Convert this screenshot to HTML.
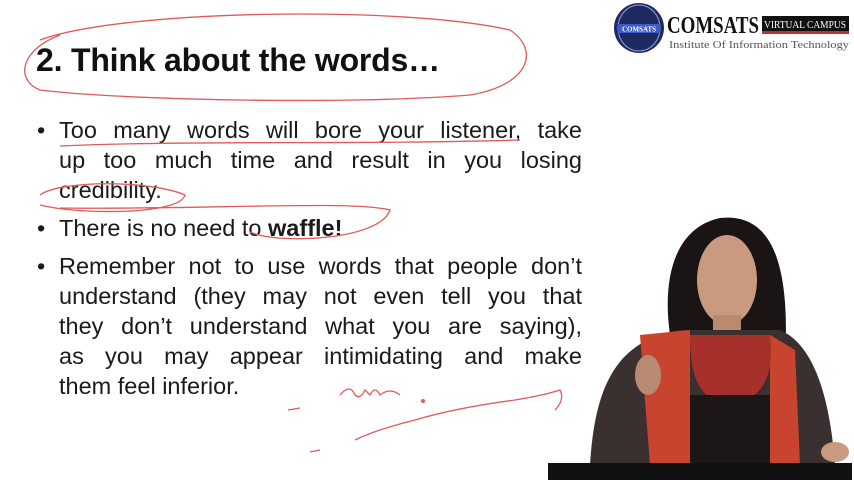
<!DOCTYPE html>
<html><head><style>
body{margin:0;width:854px;height:480px;background:#fff;overflow:hidden;position:relative;font-family:"Liberation Sans",sans-serif;}
.t{position:absolute;left:36px;top:42px;font-size:32px;font-weight:bold;color:#111;letter-spacing:-0.2px}
.l{position:absolute;left:59px;width:523px;font-size:23.5px;line-height:30px;color:#1a1a1a;white-space:nowrap}
.j{text-align:justify;text-align-last:justify;white-space:normal}
.d:before{content:"•";position:absolute;left:-22px}
svg{position:absolute;left:0;top:0}
</style></head><body>
<div class="t">2. Think about the words…</div>
<div class="l j d" style="top:115px">Too many words will bore your listener, take</div>
<div class="l j" style="top:145px">up too much time and result in you losing</div>
<div class="l" style="top:175px">credibility.</div>
<div class="l d" style="top:213px">There is no need to <b>waffle!</b></div>
<div class="l j d" style="top:251px">Remember not to use words that people don’t</div>
<div class="l j" style="top:281px">understand (they may not even tell you that</div>
<div class="l j" style="top:311px">they don’t understand what you are saying),</div>
<div class="l j" style="top:341px">as you may appear intimidating and make</div>
<div class="l" style="top:371px">them feel inferior.</div>
<svg width="854" height="480">
<g fill="none" stroke="#e05a5a" stroke-width="1.3">
<path d="M40 40 C120 10 400 5 510 30 C540 50 530 85 470 95 C350 105 120 100 40 90 C15 80 20 50 60 35"/>
<path d="M60 146 C200 140 350 145 520 140"/>
<path d="M40 195 C60 180 150 180 185 195 C180 215 80 215 40 205"/>
<path d="M60 208 C200 210 350 200 390 210 C380 240 280 245 250 232"/>
<path d="M340 395 q10 -12 15 0 q5 5 10 -5 l5 5 q5 -10 10 0 q10 -8 20 0"/>
<path d="M355 440 q20 -10 60 -20 q40 -12 100 -20 q30 -5 45 -10 q5 10 -5 20"/>
<path d="M288 410 l12 -2 M310 452 l10 -2"/>
</g>
<circle cx="423" cy="401" r="2" fill="#e05a5a"/>
<circle cx="639" cy="28" r="25" fill="#1f2a63"/>
<ellipse cx="639" cy="28" rx="21" ry="23" fill="none" stroke="#8aa0d8" stroke-width="1"/>
<rect x="618" y="24" width="42" height="9" fill="#3b5bc8"/>
<text x="639" y="31.5" font-size="7" fill="#fff" text-anchor="middle" font-weight="bold" font-family="Liberation Serif">COMSATS</text>
<text x="667" y="33" font-size="24" font-family="Liberation Serif" font-weight="bold" fill="#111" textLength="92" lengthAdjust="spacingAndGlyphs">COMSATS</text>
<rect x="762" y="16" width="87" height="15" fill="#111"/>
<rect x="762" y="31" width="87" height="3" fill="#c03030"/>
<text x="805" y="28" font-size="10" font-family="Liberation Serif" fill="#fff" text-anchor="middle" textLength="82" lengthAdjust="spacingAndGlyphs">VIRTUAL CAMPUS</text>
<text x="669" y="48" font-size="10" font-family="Liberation Serif" fill="#555" textLength="180" lengthAdjust="spacingAndGlyphs">Institute Of Information Technology</text>
<path d="M675 360 C660 300 665 230 720 218 C775 212 790 270 785 360 Z" fill="#1a1414"/>
<ellipse cx="727" cy="280" rx="30" ry="45" fill="#c99a80"/>
<rect x="713" y="315" width="28" height="25" fill="#b88a70"/>
<path d="M590 465 C595 380 620 340 680 330 L780 330 C815 345 830 400 835 465 Z" fill="#3a3030"/>
<path d="M640 335 L690 330 L690 465 L650 465 Z" fill="#c8442e"/>
<path d="M770 335 L795 350 L800 465 L770 465 Z" fill="#c8442e"/>
<path d="M690 335 L770 335 C775 380 760 400 730 405 C700 400 690 380 690 335 Z" fill="#a8302a"/>
<rect x="690" y="395" width="80" height="70" fill="#1c1616"/>
<ellipse cx="648" cy="375" rx="13" ry="20" fill="#b98a72"/>
<ellipse cx="835" cy="452" rx="14" ry="10" fill="#c99a80"/>
<rect x="548" y="463" width="304" height="17" fill="#111"/>
</svg>
</body></html>
